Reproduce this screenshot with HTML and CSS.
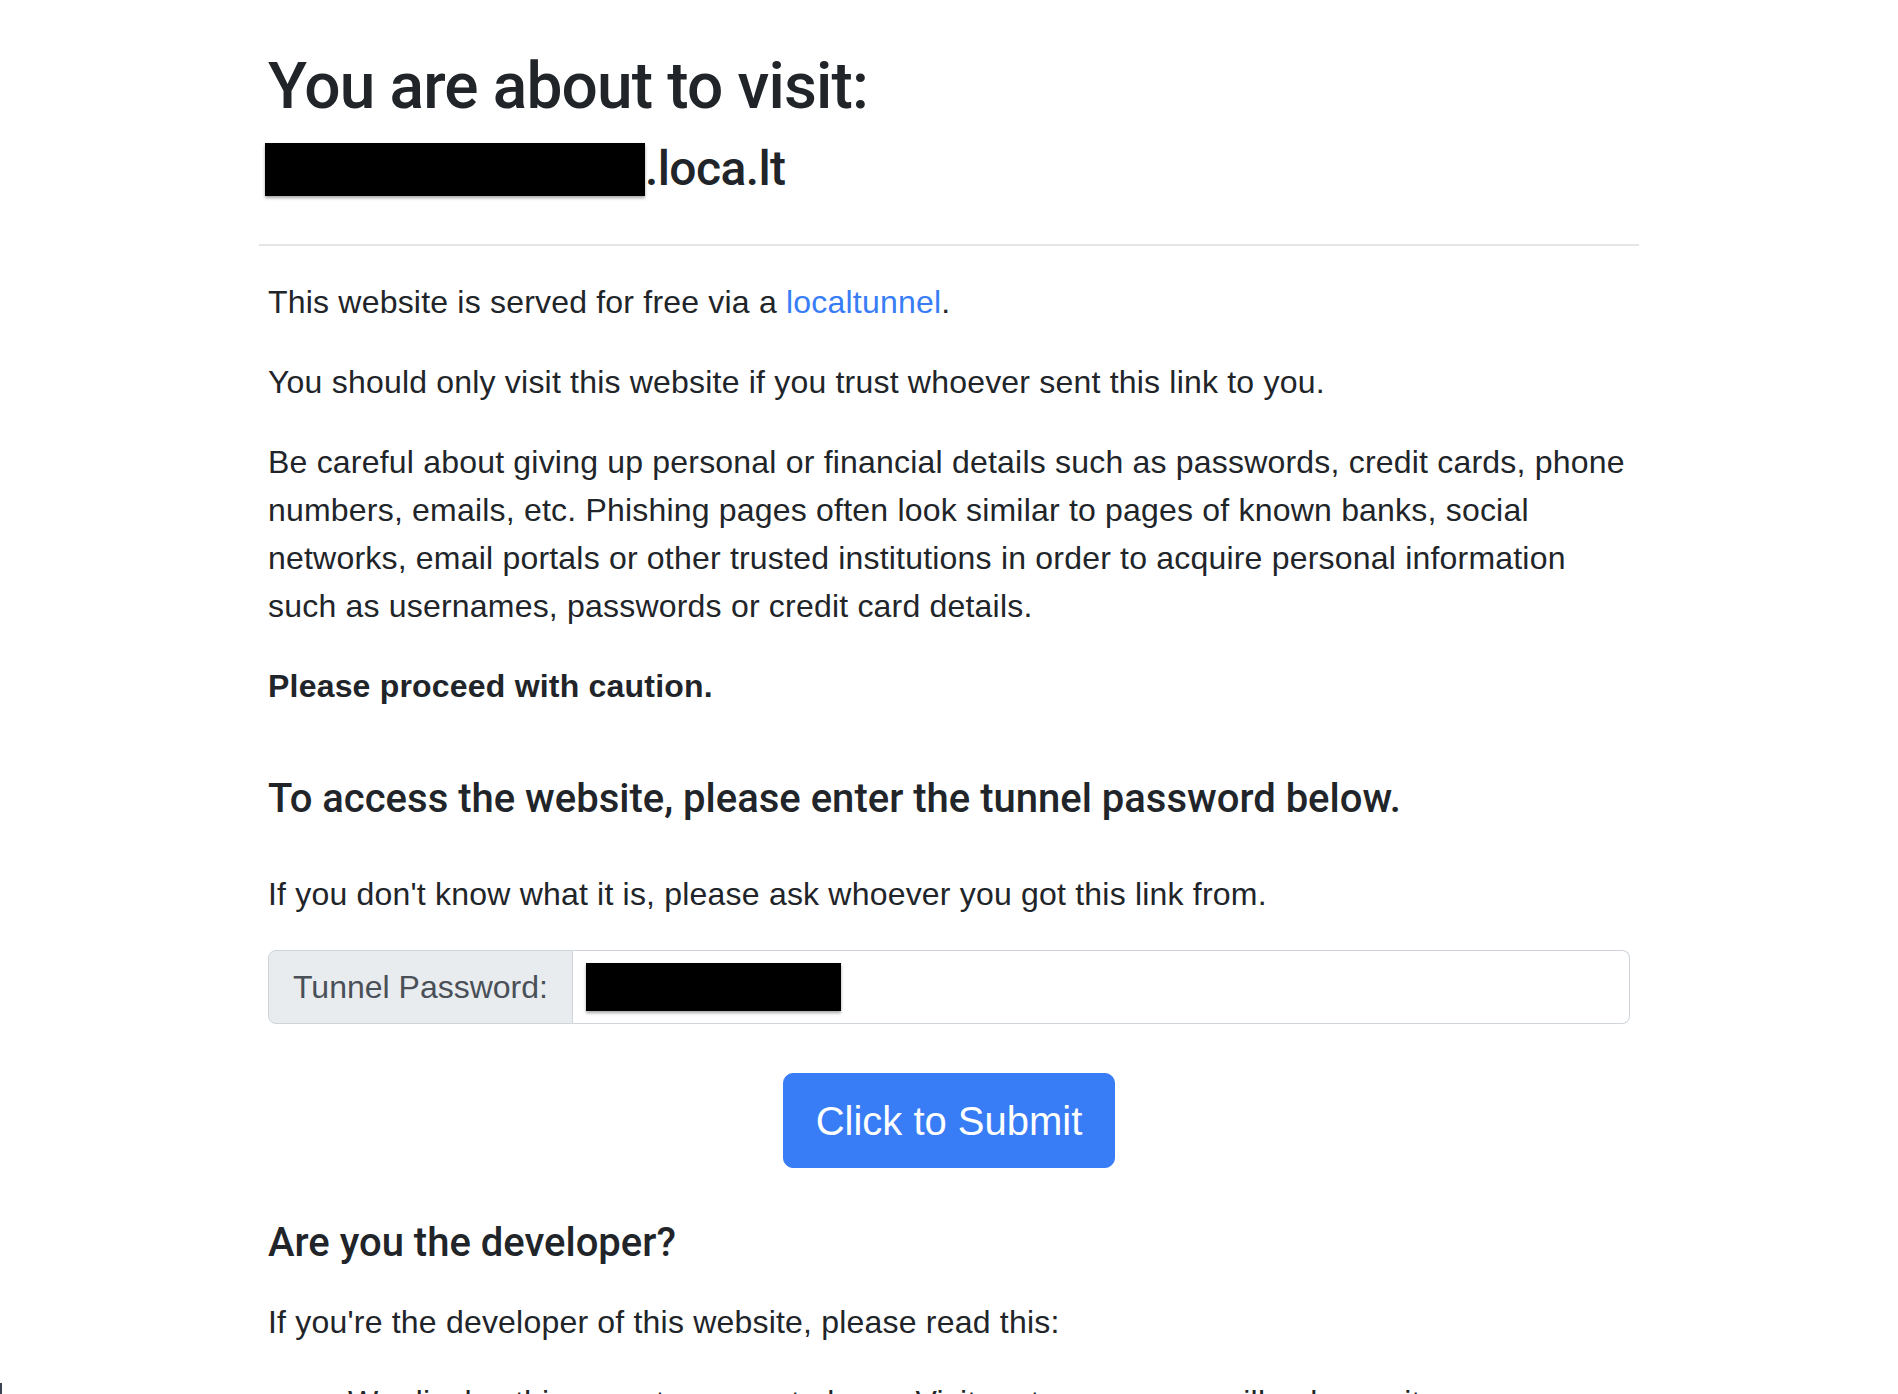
FILE: index.html
```html
<!DOCTYPE html>
<html lang="en">
<head>
<meta charset="utf-8">
<title>Tunnel website ahead!</title>
<link rel="stylesheet" href="styles.css">
</head>
<body>
<main class="container">
  <header class="content">
    <h1 class="title">You are about to visit:</h1>
    <h2 class="host"><span class="redact redact-host"></span>.loca.lt</h2>
  </header>
  <hr class="divider">
  <section class="content">
    <p>This website is served for free via a <a class="link" href="#">localtunnel</a>.</p>
    <p>You should only visit this website if you trust whoever sent this link to you.</p>
    <p>Be careful about giving up personal or financial details such as passwords, credit cards, phone numbers, emails, etc. Phishing pages often look similar to pages of known banks, social networks, email portals or other trusted institutions in order to acquire personal information such as usernames, passwords or credit card details.</p>
    <p class="strong">Please proceed with caution.</p>

    <h3 class="section-title access">To access the website, please enter the tunnel password below.</h3>
    <p>If you don't know what it is, please ask whoever you got this link from.</p>

    <form class="form">
      <div class="input-group">
        <span class="input-label">Tunnel Password:</span>
        <div class="input-field"><span class="redact redact-pass"></span></div>
      </div>
      <div class="actions">
        <button type="button" class="btn">Click to Submit</button>
      </div>
    </form>

    <h3 class="section-title dev">Are you the developer?</h3>
    <p>If you're the developer of this website, please read this:</p>
    <ul class="notes">
      <li>We display this page to prevent abuse. Visitors to your page will only see it once.</li>
      <li>To bypass this page, you can set and send a bypass-tunnel-reminder request header with any value.</li>
    </ul>
  </section>
</main>
<div class="edge-mark"></div>
</body>
</html>
```

FILE: styles.css
```css
html {
  overflow: hidden;
}

body {
  margin: 0;
  background: #ffffff;
  color: #212529;
  font-family: "Liberation Sans", Arial, sans-serif;
  font-size: 32px;
  line-height: 48px;
  letter-spacing: 0.2px;
}

.container {
  width: 1380px;
  margin: 0 auto;
  padding-top: 48px;
}

.content {
  padding: 0 9px;
}

.title {
  font-family: Roboto, "Liberation Sans", sans-serif;
  font-weight: 500;
  font-size: 64px;
  line-height: 77px;
  letter-spacing: -0.85px;
  margin: 0 0 15px;
}

.host {
  font-family: Roboto, "Liberation Sans", sans-serif;
  font-weight: 500;
  font-size: 48px;
  line-height: 58px;
  letter-spacing: -0.6px;
  margin: 0;
}

.redact {
  background: #000000;
  box-shadow: 0 2px 3px rgba(0, 0, 0, 0.35);
}

.redact-host {
  display: inline-block;
  width: 380px;
  height: 53px;
  margin-left: -3px;
  vertical-align: -11px;
}

.divider {
  border: 0;
  border-top: 2px solid rgba(0, 0, 0, 0.1);
  margin: 46px 0 32px;
}

p {
  margin: 0 0 32px;
}

.link {
  color: #387df6;
  text-decoration: none;
}

.strong {
  font-weight: 700;
}

.section-title {
  font-family: Roboto, "Liberation Sans", sans-serif;
  font-weight: 500;
  font-size: 40px;
  line-height: 48px;
  letter-spacing: 0;
}

.access {
  margin: 65px 0 47px;
}

.dev {
  margin: 51px 0 31px;
}

.form {
  margin: 0;
}

.input-group {
  display: flex;
  margin-top: 1px;
}

.input-label {
  padding: 12px 24px;
  background: #e9ecef;
  color: #495057;
  letter-spacing: 0;
  border: 1px solid #ced4da;
  border-radius: 8px 0 0 8px;
}

.input-field {
  flex: 1;
  padding: 12px 13px;
  background: #ffffff;
  border: 1px solid #ced4da;
  border-left: 0;
  border-radius: 0 8px 8px 0;
}

.redact-pass {
  display: block;
  width: 255px;
  height: 48px;
}

.actions {
  display: flex;
  justify-content: center;
  margin-top: 49px;
}

.btn {
  font-family: "Liberation Sans", Arial, sans-serif;
  font-size: 40px;
  line-height: 60px;
  letter-spacing: 0;
  padding: 17px 32px 16px;
  color: #ffffff;
  background: #387df6;
  border: 1px solid #387df6;
  border-radius: 10px;
}

.notes {
  margin: 0;
  padding-left: 80px;
}

.edge-mark {
  position: fixed;
  left: 0;
  bottom: 0;
  width: 2px;
  height: 11px;
  background: #3a4150;
}
```
